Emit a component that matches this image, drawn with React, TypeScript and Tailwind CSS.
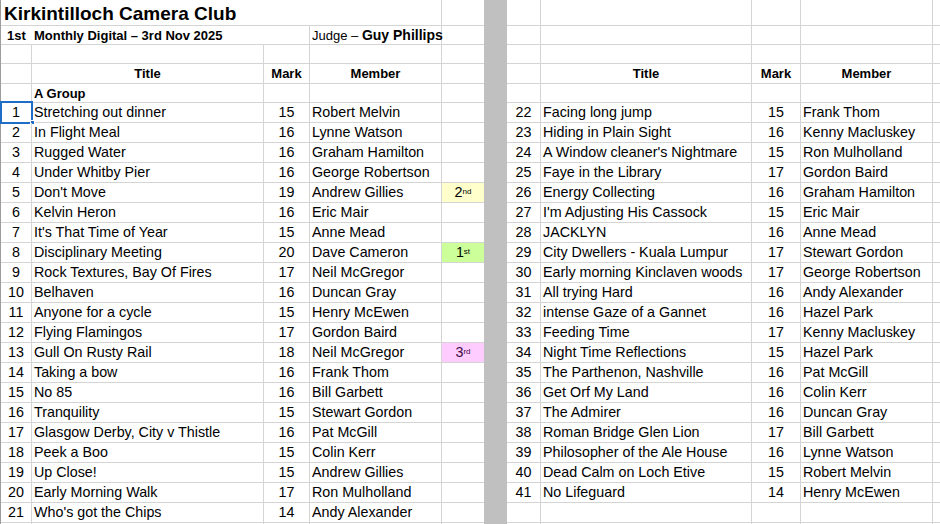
import type { ReactNode } from "react";

type Entry = {
  n: number;
  title: string;
  mark: number;
  member: string;
  place?: "1st" | "2nd" | "3rd";
};

const groupA: Entry[] = [
  { n: 1, title: "Stretching out dinner", mark: 15, member: "Robert Melvin" },
  { n: 2, title: "In Flight Meal", mark: 16, member: "Lynne Watson" },
  { n: 3, title: "Rugged Water", mark: 16, member: "Graham Hamilton" },
  { n: 4, title: "Under Whitby Pier", mark: 16, member: "George Robertson" },
  { n: 5, title: "Don't Move", mark: 19, member: "Andrew Gillies", place: "2nd" },
  { n: 6, title: "Kelvin Heron", mark: 16, member: "Eric Mair" },
  { n: 7, title: "It's That Time of Year", mark: 15, member: "Anne Mead" },
  { n: 8, title: "Disciplinary Meeting", mark: 20, member: "Dave Cameron", place: "1st" },
  { n: 9, title: "Rock Textures, Bay Of Fires", mark: 17, member: "Neil McGregor" },
  { n: 10, title: "Belhaven", mark: 16, member: "Duncan Gray" },
  { n: 11, title: "Anyone for a cycle", mark: 15, member: "Henry McEwen" },
  { n: 12, title: "Flying Flamingos", mark: 17, member: "Gordon Baird" },
  { n: 13, title: "Gull On Rusty Rail", mark: 18, member: "Neil McGregor", place: "3rd" },
  { n: 14, title: "Taking a bow", mark: 16, member: "Frank Thom" },
  { n: 15, title: "No 85", mark: 16, member: "Bill Garbett" },
  { n: 16, title: "Tranquility", mark: 15, member: "Stewart Gordon" },
  { n: 17, title: "Glasgow Derby, City v Thistle", mark: 16, member: "Pat McGill" },
  { n: 18, title: "Peek a Boo", mark: 15, member: "Colin Kerr" },
  { n: 19, title: "Up Close!", mark: 15, member: "Andrew Gillies" },
  { n: 20, title: "Early Morning Walk", mark: 17, member: "Ron Mulholland" },
  { n: 21, title: "Who's got the Chips", mark: 14, member: "Andy Alexander" },
];

const groupB: Entry[] = [
  { n: 22, title: "Facing long jump", mark: 15, member: "Frank Thom" },
  { n: 23, title: "Hiding in Plain Sight", mark: 16, member: "Kenny Macluskey" },
  { n: 24, title: "A Window cleaner's Nightmare", mark: 15, member: "Ron Mulholland" },
  { n: 25, title: "Faye in the Library", mark: 17, member: "Gordon Baird" },
  { n: 26, title: "Energy Collecting", mark: 16, member: "Graham Hamilton" },
  { n: 27, title: "I'm Adjusting His Cassock", mark: 15, member: "Eric Mair" },
  { n: 28, title: "JACKLYN", mark: 16, member: "Anne Mead" },
  { n: 29, title: "City Dwellers - Kuala Lumpur", mark: 17, member: "Stewart Gordon" },
  { n: 30, title: "Early morning Kinclaven woods", mark: 17, member: "George Robertson" },
  { n: 31, title: "All trying Hard", mark: 16, member: "Andy Alexander" },
  { n: 32, title: "intense Gaze of a Gannet", mark: 16, member: "Hazel Park" },
  { n: 33, title: "Feeding Time", mark: 17, member: "Kenny Macluskey" },
  { n: 34, title: "Night Time Reflections", mark: 15, member: "Hazel Park" },
  { n: 35, title: "The Parthenon, Nashville", mark: 16, member: "Pat McGill" },
  { n: 36, title: "Get Orf My Land", mark: 16, member: "Colin Kerr" },
  { n: 37, title: "The Admirer", mark: 16, member: "Duncan Gray" },
  { n: 38, title: "Roman Bridge Glen Lion", mark: 17, member: "Bill Garbett" },
  { n: 39, title: "Philosopher of the Ale House", mark: 16, member: "Lynne Watson" },
  { n: 40, title: "Dead Calm on Loch Etive", mark: 15, member: "Robert Melvin" },
  { n: 41, title: "No Lifeguard", mark: 14, member: "Henry McEwen" },
];

const placeStyle = {
  "1st": "bg-[#ccff99]",
  "2nd": "bg-[#ffffcc]",
  "3rd": "bg-[#ffccff] text-[#3a0a40]",
};

const line = "border-[#d4d4d4]";

function Cell({
  w,
  children,
  className = "",
  noBorder = false,
}: {
  w: string;
  children?: ReactNode;
  className?: string;
  noBorder?: boolean;
}) {
  return (
    <div
      className={`${w} shrink-0 h-full flex items-center whitespace-nowrap ${
        noBorder ? "" : `border-r ${line}`
      } ${className}`}
    >
      {children}
    </div>
  );
}

function Row({ h, children }: { h: string; children?: ReactNode }) {
  return <div className={`${h} flex border-b ${line} shrink-0`}>{children}</div>;
}

function Place({ place }: { place?: Entry["place"] }) {
  if (!place) return null;
  return (
    <span>
      {place.slice(0, 1)}
      <sup className="text-[8px] relative -top-[3px]">{place.slice(1)}</sup>
    </span>
  );
}

function LeftSheet() {
  const empty = (h: string) => (
    <Row h={h}>
      <Cell w="w-[31px]" />
      <Cell w="w-[232px]" />
      <Cell w="w-[46px]" />
      <Cell w="w-[132px]" />
      <Cell w="w-[42px]" noBorder />
    </Row>
  );

  return (
    <div className="w-[484px] shrink-0 border-l border-[#9c9c9c] flex flex-col">
      <Row h="h-[26px]">
        <Cell w="w-[441px]" className="pl-[3px] pt-[2px] text-[19px] font-bold">
          Kirkintilloch Camera Club
        </Cell>
        <Cell w="w-[42px]" noBorder />
      </Row>
      <Row h="h-[19px]">
        <Cell w="w-[309px]" className="text-[13px] font-bold">
          <span className="w-[31px] text-center">1st</span>
          <span className="pl-[2px]">Monthly Digital – 3rd Nov 2025</span>
        </Cell>
        <Cell w="w-[132px]" className="pl-[2px] text-[13px]">
          Judge –&nbsp;<span className="font-bold text-[14px]">Guy Phillips</span>
        </Cell>
        <Cell w="w-[42px]" noBorder />
      </Row>
      {empty("h-[19px]")}
      <Row h="h-[20px]">
        <Cell w="w-[31px]" />
        <Cell w="w-[232px]" className="justify-center text-[13px] font-bold">
          Title
        </Cell>
        <Cell w="w-[46px]" className="justify-center text-[13px] font-bold">
          Mark
        </Cell>
        <Cell w="w-[132px]" className="justify-center text-[13px] font-bold">
          Member
        </Cell>
        <Cell w="w-[42px]" noBorder />
      </Row>
      <Row h="h-[19px]">
        <Cell w="w-[31px]" />
        <Cell w="w-[232px]" className="pl-[2px] text-[13px] font-bold">
          A Group
        </Cell>
        <Cell w="w-[46px]" />
        <Cell w="w-[132px]" />
        <Cell w="w-[42px]" noBorder />
      </Row>
      {groupA.map((e) => (
        <Row key={e.n} h="h-[20px]">
          <Cell w="w-[31px]" className="justify-center pb-px relative">
            {e.n}
            {e.n === 1 && (
              <>
                <div className="absolute -left-[1px] -top-[2px] w-[33px] h-[23px] border-2 border-[#1e6ec8]" />
                <div className="absolute left-[29px] top-[17px] w-[5px] h-[5px] bg-[#1e6ec8] border border-white" />
              </>
            )}
          </Cell>
          <Cell w="w-[232px]" className="pl-[2px] pb-px">
            {e.title}
          </Cell>
          <Cell w="w-[46px]" className="justify-center pb-px">
            {e.mark}
          </Cell>
          <Cell w="w-[132px]" className="pl-[2px] pb-px">
            {e.member}
          </Cell>
          <Cell
            w="w-[42px]"
            noBorder
            className={`justify-center pb-px ${e.place ? placeStyle[e.place] : ""}`}
          >
            <Place place={e.place} />
          </Cell>
        </Row>
      ))}
      {empty("h-[20px]")}
    </div>
  );
}

function RightSheet() {
  const empty = (h: string, key?: number) => (
    <Row h={h} key={key}>
      <Cell w="w-[34px]" />
      <Cell w="w-[211px]" />
      <Cell w="w-[49px]" />
      <Cell w="w-[132px]" />
      <Cell w="flex-1" noBorder />
    </Row>
  );

  return (
    <div className="flex-1 flex flex-col">
      {empty("h-[26px]")}
      {empty("h-[19px]")}
      {empty("h-[19px]")}
      <Row h="h-[20px]">
        <Cell w="w-[34px]" />
        <Cell w="w-[211px]" className="justify-center text-[13px] font-bold">
          Title
        </Cell>
        <Cell w="w-[49px]" className="justify-center text-[13px] font-bold">
          Mark
        </Cell>
        <Cell w="w-[132px]" className="justify-center text-[13px] font-bold">
          Member
        </Cell>
        <Cell w="flex-1" noBorder />
      </Row>
      {empty("h-[19px]")}
      {groupB.map((e) => (
        <Row key={e.n} h="h-[20px]">
          <Cell w="w-[34px]" className="justify-center pb-px">
            {e.n}
          </Cell>
          <Cell w="w-[211px]" className="pl-[2px] pb-px">
            {e.title}
          </Cell>
          <Cell w="w-[49px]" className="justify-center pb-px">
            {e.mark}
          </Cell>
          <Cell w="w-[132px]" className="pl-[2px] pb-px">
            {e.member}
          </Cell>
          <Cell w="flex-1" noBorder />
        </Row>
      ))}
      {empty("h-[20px]", 1)}
      {empty("h-[20px]", 2)}
    </div>
  );
}

export default function App() {
  return (
    <div className="w-[940px] h-[524px] overflow-hidden bg-white text-black text-[14.3px] leading-none font-['Liberation_Sans',Arial,sans-serif] flex">
      <LeftSheet />
      <div className="w-[23px] shrink-0 bg-[#c0c0c0]" />
      <RightSheet />
    </div>
  );
}
